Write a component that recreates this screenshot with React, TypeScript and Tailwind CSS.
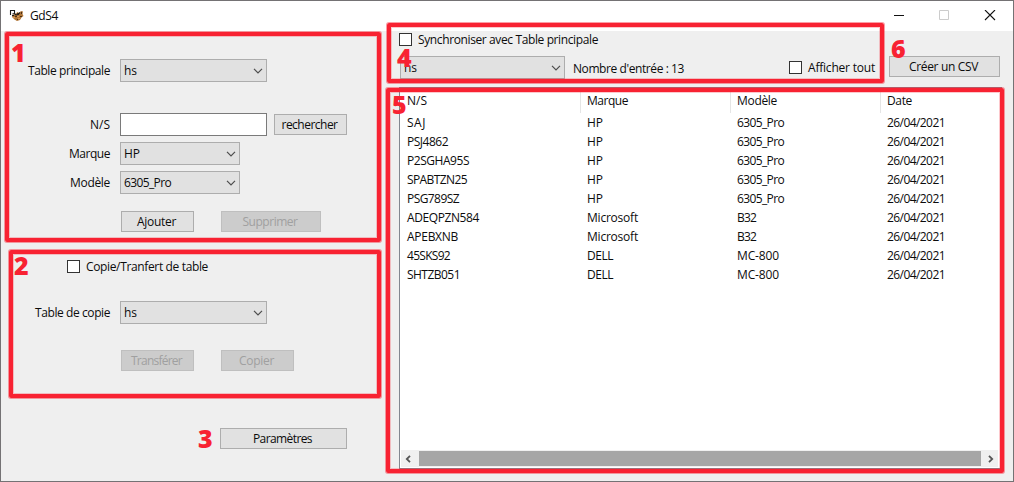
import { useLayoutEffect, useRef, useState, type ReactNode } from "react";

/* Text whose tracking is adjusted so that the run takes w pixels. */
function Label({ children, w, className = "" }: { children: string; w: number; className?: string }) {
  const ref = useRef<HTMLSpanElement>(null);
  const [spacing, setSpacing] = useState(0);
  useLayoutEffect(() => {
    if (ref.current) {
      setSpacing((w - ref.current.getBoundingClientRect().width) / children.length);
    }
  }, [w, children]);
  return (
    <span ref={ref} className={`inline-block shrink-0 whitespace-pre ${className}`} style={{ letterSpacing: spacing }}>
      {children}
    </span>
  );
}

function Chevron() {
  return (
    <svg width="10" height="6" viewBox="0 0 10 6" fill="none" stroke="#4d4d4d" strokeWidth="1.2">
      <path d="M1 0.8 5 4.8 9 0.8" />
    </svg>
  );
}

function Combo({ value, w, className }: { value: string; w: number; className: string }) {
  return (
    <div className={`flex h-[23px] shrink-0 items-center justify-between border border-[#adadad] bg-[#e1e1e1] pr-[3px] pl-[3px] ${className}`}>
      <Label w={w}>{value}</Label>
      <Chevron />
    </div>
  );
}

function Button({ children, w, className, disabled = false }: { children: string; w: number; className: string; disabled?: boolean }) {
  return (
    <button
      disabled={disabled}
      className={`flex h-[21px] shrink-0 items-center justify-center border pr-[2px] ${
        disabled ? "border-[#bfbfbf] bg-[#cccccc] text-[#a0a0a0]" : "border-[#adadad] bg-[#e1e1e1]"
      } ${className}`}
    >
      <Label w={w}>{children}</Label>
    </button>
  );
}

function Check({ children, w }: { children: string; w: number }) {
  return (
    <label className="flex h-[13px] shrink-0 items-center gap-[6px]">
      <span className="size-[13px] border border-[#333333] bg-white" />
      <Label w={w}>{children}</Label>
    </label>
  );
}

function Field({ label, w, className, children }: { label: string; w: number; className: string; children: ReactNode }) {
  return (
    <div className={`flex h-[23px] items-center ${className}`}>
      <div className="mr-[10px] flex w-[109px] shrink-0 justify-end">
        <Label w={w}>{label}</Label>
      </div>
      {children}
    </div>
  );
}

type Row = { ns: string; nsW: number; marque: string; marqueW: number; modele: string; modeleW: number };

const rows: Row[] = [
  { ns: "SAJ", nsW: 19, marque: "HP", marqueW: 16, modele: "6305_Pro", modeleW: 47 },
  { ns: "PSJ4862", nsW: 41, marque: "HP", marqueW: 16, modele: "6305_Pro", modeleW: 47 },
  { ns: "P2SGHA95S", nsW: 62, marque: "HP", marqueW: 16, modele: "6305_Pro", modeleW: 47 },
  { ns: "SPABTZN25", nsW: 60, marque: "HP", marqueW: 16, modele: "6305_Pro", modeleW: 47 },
  { ns: "PSG789SZ", nsW: 52, marque: "HP", marqueW: 16, modele: "6305_Pro", modeleW: 47 },
  { ns: "ADEQPZN584", nsW: 72, marque: "Microsoft", marqueW: 51, modele: "B32", modeleW: 19 },
  { ns: "APEBXNB", nsW: 51, marque: "Microsoft", marqueW: 51, modele: "B32", modeleW: 19 },
  { ns: "45SKS92", nsW: 43, marque: "DELL", marqueW: 26, modele: "MC-800", modeleW: 42 },
  { ns: "SHTZB051", nsW: 53, marque: "DELL", marqueW: 26, modele: "MC-800", modeleW: 42 },
];

const grid = "grid grid-cols-[180px_150px_150px_1fr]";

function Table() {
  return (
    <div className="mt-[8px] flex h-[382px] w-[603px] flex-col border border-[#828790] bg-white">
      <div className={`${grid} h-[25px] pl-px leading-[25px]`}>
        <div className="border-r border-[#e5e5e5] pl-[6px]"><Label w={20}>N/S</Label></div>
        <div className="border-r border-[#e5e5e5] pl-[6px]"><Label w={41}>Marque</Label></div>
        <div className="border-r border-[#e5e5e5] pl-[6px]"><Label w={40}>Modèle</Label></div>
        <div className="pl-[6px]"><Label w={25}>Date</Label></div>
      </div>
      <div className="flex-1">
        {rows.map((r) => (
          <div key={r.ns} className={`${grid} h-[19px] pl-px leading-[19px]`}>
            <div className="pl-[6px]"><Label w={r.nsW}>{r.ns}</Label></div>
            <div className="pl-[6px]"><Label w={r.marqueW}>{r.marque}</Label></div>
            <div className="pl-[6px]"><Label w={r.modeleW}>{r.modele}</Label></div>
            <div className="pl-[6px]"><Label w={58}>26/04/2021</Label></div>
          </div>
        ))}
      </div>
      <div className="mr-[3px] mb-px ml-px flex h-[17px] items-center justify-between bg-[#f0f0f0] pr-[4px] pl-[4px]">
        <svg width="7" height="8" viewBox="0 0 7 8" fill="none" stroke="#555" strokeWidth="1.8"><path d="M5 0.8 1.8 4 5 7.2" /></svg>
        <div className="h-[15px] w-[562px] bg-[#a6a6a6]" />
        <svg width="7" height="8" viewBox="0 0 7 8" fill="none" stroke="#555" strokeWidth="1.8"><path d="M2 0.8 5.2 4 2 7.2" /></svg>
      </div>
    </div>
  );
}

function Frame({ className }: { className: string }) {
  return (
    <div
      className={`pointer-events-none absolute rounded-[2px] border-4 border-[#f82232] shadow-[0_0_0_1px_#f8223270,inset_0_0_0_1px_#f8223240] ${className}`}
    />
  );
}

function Digit({ children, className }: { children: string; className: string }) {
  return (
    <span className={`absolute font-['Open_Sans','Noto_Sans',sans-serif] text-[25px] leading-[26px] font-extrabold text-[#f82232] ${className}`}>
      {children}
    </span>
  );
}

function AppIcon() {
  return (
    <svg width="16" height="16" viewBox="0 0 16 16">
      <path d="M3.5 6 6.5 6 8.5 4 10 5 12 3 14 3.5 13.5 6 14.5 8 12.5 9.5 11 12 8 13 5.5 11.5 3 9Z" fill="#b07638" />
      <path d="M6 8h2v1H6zM8 5h2v2H8zM11 8h2v1h-2zM12 4h1v2h-1zM8 11h1v1H8z" fill="#4d2f14" />
      <path d="M8 8.5h2M9 10.5h2M4 9.5h2" stroke="#d89a55" />
      <path d="M1.5 2.5h4v4h-4z" fill="white" />
      <path d="M1.5 7V2.5h4v3.2H3.5M5 5l2 2 2-.5 2-2M3 7.5h2" stroke="#1c1c1c" strokeWidth="1.1" fill="none" />
    </svg>
  );
}

export default function App() {
  return (
    <div className="relative flex h-[482px] w-[1014px] flex-col overflow-hidden border border-[#747274] bg-[#efefef] font-['Open_Sans','Noto_Sans',sans-serif] text-[12px] leading-[16px] text-[#0c0c0c]">
      <header className="flex h-[30px] shrink-0 items-center bg-white pl-[8px]">
        <AppIcon />
        <Label w={28} className="ml-[5px]">GdS4</Label>
        <svg className="mr-[16px] ml-auto" width="104" height="12" viewBox="0 0 104 12" fill="none" stroke="#111">
          <path d="M1 5.5h10" />
          <path d="M46.5 0.5h9v9h-9z" stroke="#cccccc" />
          <path d="M92 0 102 10M102 0 92 10" strokeWidth="1.1" />
        </svg>
      </header>

      <main className="flex flex-1">
        <section className="flex w-[398px] shrink-0 flex-col">
          <Field label="Table principale" w={82} className="mt-[28px]">
            <Combo value="hs" w={13} className="w-[147px]" />
          </Field>
          <Field label="N/S" w={20} className="mt-[31px]">
            <input className="h-[23px] w-[147px] border border-[#7a7a7a] bg-white" />
            <Button w={56} className="ml-[7px] w-[73px]">rechercher</Button>
          </Field>
          <Field label="Marque" w={41} className="mt-[6px]">
            <Combo value="HP" w={16} className="w-[120px]" />
          </Field>
          <Field label="Modèle" w={40} className="mt-[6px]">
            <Combo value="6305_Pro" w={47} className="w-[120px]" />
          </Field>
          <div className="mt-[17px] flex gap-[27px] pl-[120px]">
            <Button w={39} className="w-[73px]">Ajouter</Button>
            <Button w={55} className="w-[100px]" disabled>Supprimer</Button>
          </div>
          <div className="mt-[28px] pl-[66px]">
            <Check w={122}>Copie/Tranfert de table</Check>
          </div>
          <Field label="Table de copie" w={75} className="mt-[28px]">
            <Combo value="hs" w={13} className="w-[147px]" />
          </Field>
          <div className="mt-[26px] flex gap-[27px] pl-[120px]">
            <Button w={51} className="w-[73px]" disabled>Transférer</Button>
            <Button w={35} className="w-[73px]" disabled>Copier</Button>
          </div>
          <div className="mt-[57px] pl-[219px]">
            <Button w={59} className="w-[127px]">Paramètres</Button>
          </div>
        </section>

        <section className="w-[603px] shrink-0 pt-[2px]">
          <Check w={180}>Synchroniser avec Table principale</Check>
          <div className="mt-[10px] flex h-[23px] pl-px">
            <Combo value="hs" w={13} className="w-[165px]" />
            <div className="ml-[8px] pt-[5px]"><Label w={111}>Nombre d'entrée : 13</Label></div>
            <div className="ml-[105px] pt-[5px]"><Check w={67}>Afficher tout</Check></div>
            <Button w={69} className="ml-[14px] w-[111px]">Créer un CSV</Button>
          </div>
          <Table />
        </section>
      </main>

      <Frame className="top-[31px] left-[4px] h-[210px] w-[376px]" />
      <Frame className="top-[249px] left-[8px] h-[148px] w-[372px]" />
      <Frame className="top-[22px] left-[386px] h-[60px] w-[497px]" />
      <Frame className="top-[87px] left-[385px] h-[385px] w-[618px]" />
      <Digit className="top-[38px] left-[10px]">1</Digit>
      <Digit className="top-[251px] left-[13px]">2</Digit>
      <Digit className="top-[424px] left-[197px]">3</Digit>
      <Digit className="top-[43px] left-[396px]">4</Digit>
      <Digit className="top-[90px] left-[391px]">5</Digit>
      <Digit className="top-[34px] left-[890px]">6</Digit>
    </div>
  );
}
